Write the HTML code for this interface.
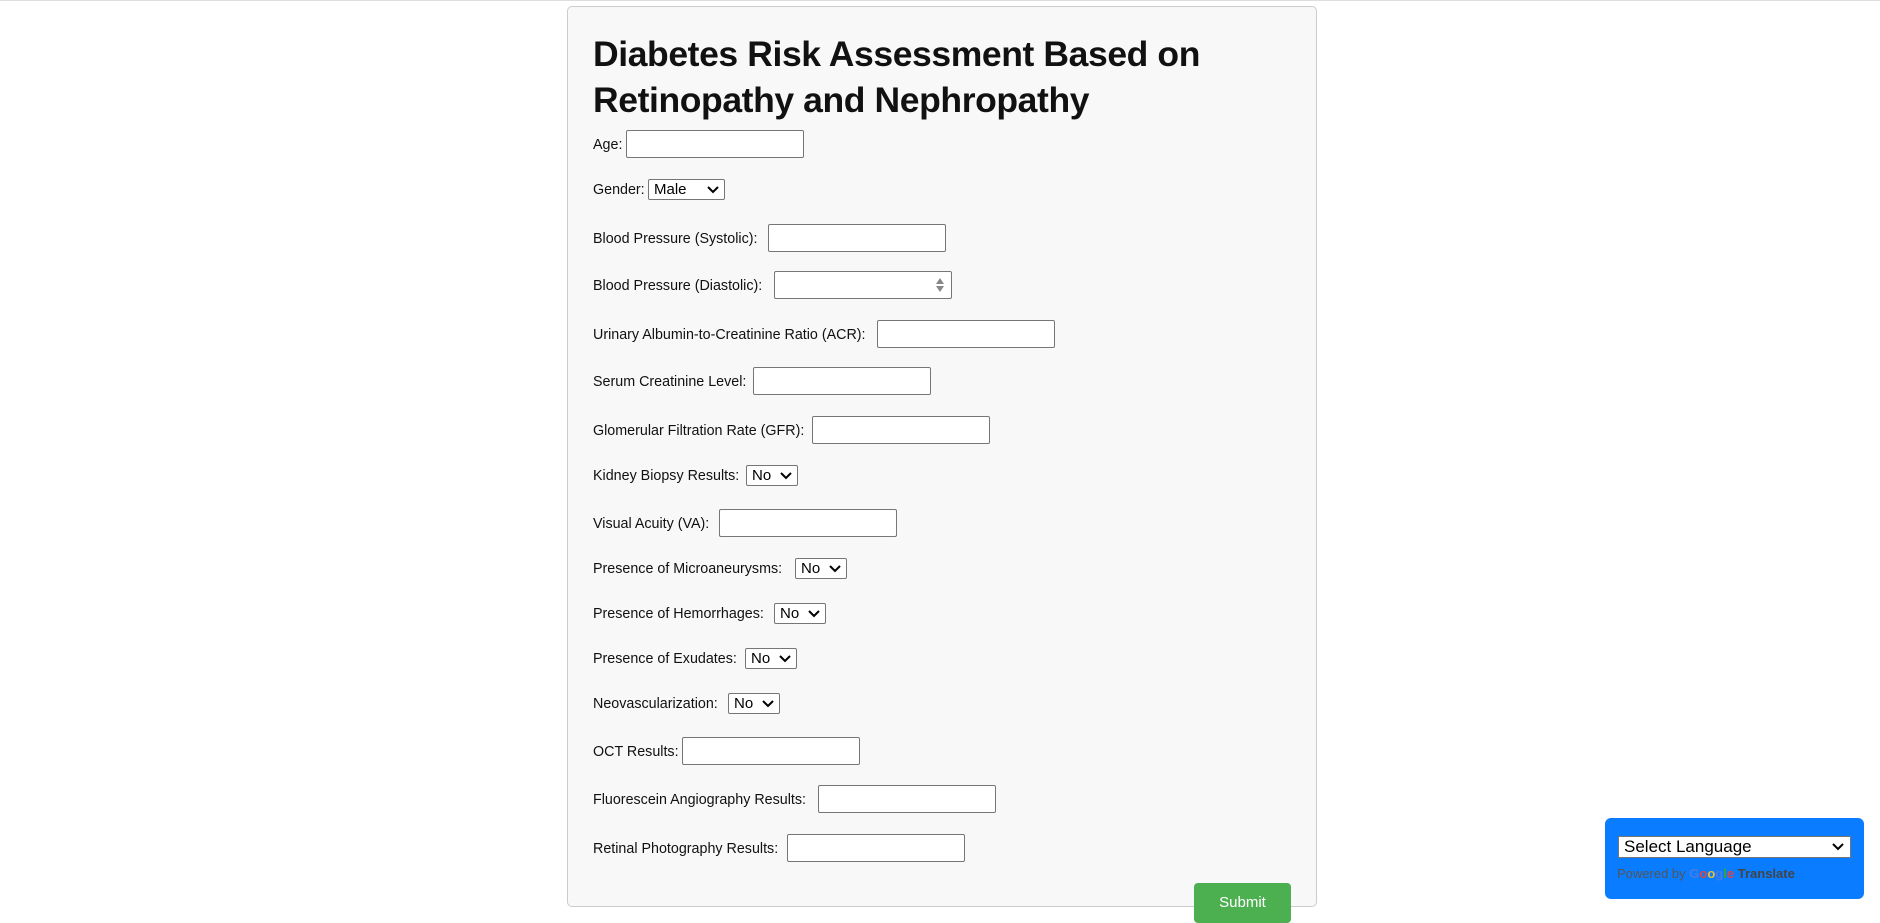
<!DOCTYPE html>
<html><head><meta charset="utf-8"><style>
html,body{margin:0;padding:0;width:1880px;height:916px;overflow:hidden;background:#fff;font-family:"Liberation Sans",Arial,sans-serif;}
.top{position:absolute;left:0;top:0;width:1880px;height:1px;background:#ddd}
.card{position:absolute;left:567px;top:6px;width:750px;height:901px;background:#f8f8f8;border:1px solid #ccc;border-radius:5px;box-sizing:border-box}
h1{position:absolute;left:593px;top:31px;margin:0;font-size:35.5px;line-height:46px;font-weight:bold;color:#111;letter-spacing:-0.4px}
.l{position:absolute;left:593px;font-size:14.3px;color:#111;line-height:18px}
.i{position:absolute;width:178px;height:28px;box-sizing:border-box;border:1px solid #767676;border-radius:2px;background:#fff}
.s{position:absolute;height:21px;box-sizing:border-box;border:1px solid #767676;border-radius:2px;background:#fff;font-size:15px;line-height:19px;padding-left:5px;color:#000}
.s svg{position:absolute;right:5px;top:6px}
.btn{position:absolute;left:1194px;top:883px;width:97px;height:40px;background:#4caf50;border-radius:4px;color:#fff;font-size:15px;text-align:center;line-height:40px}
.tr{position:absolute;left:1605px;top:818px;width:259px;height:81px;background:#0a7cff;border-radius:6px}
.tsel{position:absolute;left:1618px;top:836px;width:233px;height:22px;background:#fff;border:1px solid #767676;box-sizing:border-box;font-size:17px;line-height:20px;padding-left:5px;color:#000}
.tsel svg{position:absolute;right:6px;top:6px}
.pw{position:absolute;left:1617px;top:866px;font-size:13px;color:#555}
</style></head><body>
<div class="top"></div>
<div class="card"></div>
<h1>Diabetes Risk Assessment Based on<br>Retinopathy and Nephropathy</h1>

<div class="l" style="top:136px">Age:</div><div class="i" style="left:626px;top:130px"></div>
<div class="l" style="top:181px">Gender:</div><div class="s" style="left:648px;top:179px;width:77px">Male<svg width="12" height="8"><path d="M1 1l5 5 5-5" stroke="#000" stroke-width="2" fill="none"/></svg></div>
<div class="l" style="top:230px">Blood Pressure (Systolic):</div><div class="i" style="left:768px;top:224px"></div>
<div class="l" style="top:277px">Blood Pressure (Diastolic):</div><div class="i" style="left:774px;top:271px"><svg style="position:absolute;right:6px;top:5px" width="10" height="16"><path d="M5 1l4 6H1z" fill="#888"/><path d="M5 15l4-6H1z" fill="#888"/></svg></div>
<div class="l" style="top:326px">Urinary Albumin-to-Creatinine Ratio (ACR):</div><div class="i" style="left:877px;top:320px"></div>
<div class="l" style="top:373px">Serum Creatinine Level:</div><div class="i" style="left:753px;top:367px"></div>
<div class="l" style="top:422px">Glomerular Filtration Rate (GFR):</div><div class="i" style="left:812px;top:416px"></div>
<div class="l" style="top:467px">Kidney Biopsy Results:</div><div class="s" style="left:746px;top:465px;width:52px">No<svg width="12" height="8"><path d="M1 1l5 5 5-5" stroke="#000" stroke-width="2" fill="none"/></svg></div>
<div class="l" style="top:515px">Visual Acuity (VA):</div><div class="i" style="left:719px;top:509px"></div>
<div class="l" style="top:560px">Presence of Microaneurysms:</div><div class="s" style="left:795px;top:558px;width:52px">No<svg width="12" height="8"><path d="M1 1l5 5 5-5" stroke="#000" stroke-width="2" fill="none"/></svg></div>
<div class="l" style="top:605px">Presence of Hemorrhages:</div><div class="s" style="left:774px;top:603px;width:52px">No<svg width="12" height="8"><path d="M1 1l5 5 5-5" stroke="#000" stroke-width="2" fill="none"/></svg></div>
<div class="l" style="top:650px">Presence of Exudates:</div><div class="s" style="left:745px;top:648px;width:52px">No<svg width="12" height="8"><path d="M1 1l5 5 5-5" stroke="#000" stroke-width="2" fill="none"/></svg></div>
<div class="l" style="top:695px">Neovascularization:</div><div class="s" style="left:728px;top:693px;width:52px">No<svg width="12" height="8"><path d="M1 1l5 5 5-5" stroke="#000" stroke-width="2" fill="none"/></svg></div>
<div class="l" style="top:743px">OCT Results:</div><div class="i" style="left:682px;top:737px"></div>
<div class="l" style="top:791px">Fluorescein Angiography Results:</div><div class="i" style="left:818px;top:785px"></div>
<div class="l" style="top:840px">Retinal Photography Results:</div><div class="i" style="left:787px;top:834px"></div>
<div class="btn">Submit</div>

<div class="tr"></div>
<div class="tsel">Select Language<svg width="12" height="8"><path d="M1 1l5 5 5-5" stroke="#000" stroke-width="2" fill="none"/></svg></div>
<div class="pw">Powered by <span style="font-weight:bold"><span style="color:#4a7be0">G</span><span style="color:#d44">o</span><span style="color:#eb3">o</span><span style="color:#4a7be0">g</span><span style="color:#3a3">l</span><span style="color:#d44">e</span></span> <b style="color:#444">Translate</b></div>
</body></html>
